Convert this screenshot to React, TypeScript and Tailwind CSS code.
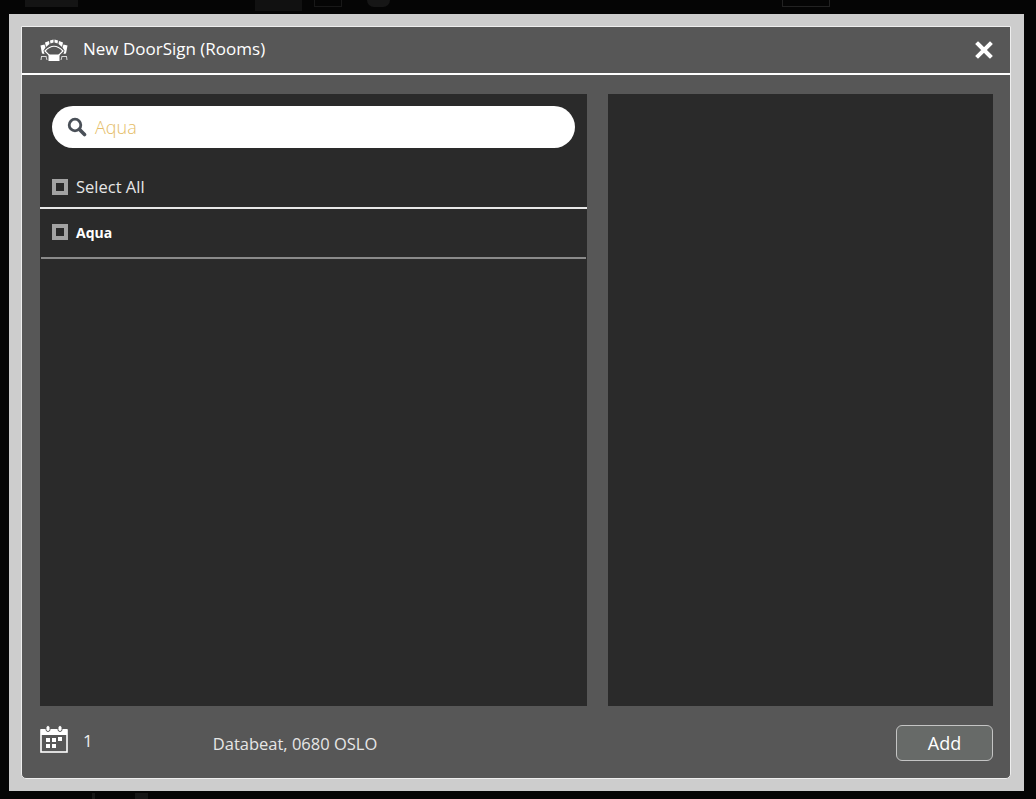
const font = { fontFamily: '"Open Sans", "Noto Sans", sans-serif' };

function RoomIcon() {
  return (
    <svg width="28" height="23" viewBox="0 0 28 23" fill="none">
      <path d="M5 12 Q14 2.5 23 12 L18.5 16.5 H9.5 Z" fill="#575757" stroke="#fff" strokeWidth="1.2" />
      <path d="M10 1.5 L13.5 0.5 L13.5 3.5 L10.5 4.5 Z" fill="#fff" />
      <path d="M18 1.5 L14.5 0.5 L14.5 3.5 L17.5 4.5 Z" fill="#fff" />
      <path d="M5 3.5 L9 2 L9.5 5 L6 8 Z" fill="#fff" />
      <path d="M23 3.5 L19 2 L18.5 5 L22 8 Z" fill="#fff" />
      <path d="M0.5 6.5 L4.5 5.5 L5.5 8.5 L3.5 11.5 L4.5 15 L2 14.5 Z" fill="#fff" />
      <path d="M27.5 6.5 L23.5 5.5 L22.5 8.5 L24.5 11.5 L23.5 15 L26 14.5 Z" fill="#fff" />
      <rect x="8.5" y="15.5" width="11" height="6.5" fill="#fff" />
      <path d="M1 17.5 H6.5 M1.5 17.5 L1 21 M6 17.5 L7 21 M21.5 17.5 H27 M22 17.5 L21 21 M26.5 17.5 L27 21" stroke="#d8d8d8" strokeWidth="1" />
    </svg>
  );
}

function CalendarIcon() {
  return (
    <svg width="28" height="28" viewBox="0 0 28 28" fill="none">
      <rect x="1" y="5" width="26" height="22" stroke="#fff" strokeWidth="1.6" fill="none" />
      <rect x="1" y="4" width="26" height="6" fill="#fff" />
      <rect x="6" y="0.5" width="4" height="6" rx="2" fill="#fff" stroke="#575757" strokeWidth="1" />
      <rect x="18" y="0.5" width="4" height="6" rx="2" fill="#fff" stroke="#575757" strokeWidth="1" />
      <rect x="6" y="13" width="4" height="4" fill="#fff" />
      <rect x="12" y="13" width="4" height="4" fill="#fff" />
      <rect x="18" y="12" width="4" height="4" fill="#fff" />
      <rect x="6" y="19" width="4" height="4" fill="#fff" />
      <rect x="12" y="19" width="4" height="4" fill="#fff" />
    </svg>
  );
}

function SearchIcon() {
  return (
    <svg width="20" height="20" viewBox="0 0 20 20" fill="none">
      <circle cx="8" cy="8" r="5.8" stroke="#4a5058" strokeWidth="2.8" />
      <path d="M12.5 12.5 L17.5 17.5" stroke="#4a5058" strokeWidth="3.6" strokeLinecap="round" />
    </svg>
  );
}

function CheckBox() {
  return <span className="block h-4 w-4 shrink-0 border-4 border-[#a3a3a3] bg-[#2a2a2a]" />;
}

export default function App() {
  return (
    <div className="h-[799px] w-[1036px] overflow-hidden bg-[#050505]" style={font}>
      <div className="flex h-[14px] items-start">
        <div className="ml-[25px] h-[7px] w-[53px] bg-[#141414]" />
        <div className="ml-[177px] h-[11px] w-[47px] bg-[#111111]" />
        <div className="ml-[12px] h-[7px] w-[28px] border-b border-x border-[#181818]" />
        <div className="ml-[25px] h-[7px] w-[23px] rounded-b-full bg-[#161616]" />
        <div className="ml-[392px] h-[7px] w-[48px] border-b border-x border-[#222222]" />
      </div>
      <div className="ml-[9px] h-[777px] w-[1015px] bg-[#cdcdcd] p-[12px]">
        <div className="flex h-[753px] w-[990px] flex-col rounded-b-[5px] border-t border-b border-x border-[#eeeeee] bg-[#575757]">
          <header className="flex h-[48px] shrink-0 items-center border-b-2 border-white pr-[17px] pl-[18px]">
            <RoomIcon />
            <h1 className="ml-[15px] pb-[4px] text-[17px] leading-none text-white">New DoorSign (Rooms)</h1>
            <button className="ml-auto text-white">
              <svg width="18" height="18" viewBox="0 0 18 18">
                <path d="M3 3 L15 15 M15 3 L3 15" stroke="#fff" strokeWidth="4" strokeLinecap="square" />
              </svg>
            </button>
          </header>

          <div className="flex min-h-0 flex-1 gap-[21px] pt-[19px] pr-[17px] pl-[18px]">
            <section className="h-[612px] w-[547px] bg-[#2a2a2a]">
              <div className="px-[12px] pt-[12px]">
                <div className="flex h-[42px] items-center rounded-full bg-white pl-[15px]">
                  <SearchIcon />
                  <span className="ml-[8px] pt-px text-[18px] font-light text-[#e5bd68]">Aqua</span>
                </div>
              </div>
              <div className="flex h-[61px] items-center gap-[8px] border-b-2 border-[#e8e8e8] pl-[12px] pt-[19px]">
                <CheckBox />
                <span className="text-[16.5px] text-[#e6e6e6]">Select All</span>
              </div>
              <div className="mx-px flex h-[50px] items-center gap-[8px] border-b-2 border-[#8a8a8a] pb-[2px] pl-[11px]">
                <CheckBox />
                <span className="text-[14px] font-bold text-white">Aqua</span>
              </div>
            </section>
            <section className="h-[612px] w-[385px] bg-[#2a2a2a]" />
          </div>

          <footer className="flex h-[72px] shrink-0 items-start pr-[17px] pl-[18px] pt-[19px]">
            <CalendarIcon />
            <span className="ml-[15px] mt-[3px] text-[17px] text-[#eeeeee]">1</span>
            <span className="ml-[120px] mt-[7px] text-[16.5px] text-[#e6e6e6]">Databeat, 0680 OSLO</span>
            <button className="ml-auto h-[36px] w-[97px] rounded-[6px] border border-[#c4c4c4] bg-[#676a68] text-[18px] text-white">
              Add
            </button>
          </footer>
        </div>
      </div>
      <div className="flex h-[8px] items-end">
        <div className="ml-[92px] h-[6px] w-[3px] bg-[#161616]" />
        <div className="ml-[40px] h-[6px] w-[13px] bg-[#161616]" />
      </div>
    </div>
  );
}
